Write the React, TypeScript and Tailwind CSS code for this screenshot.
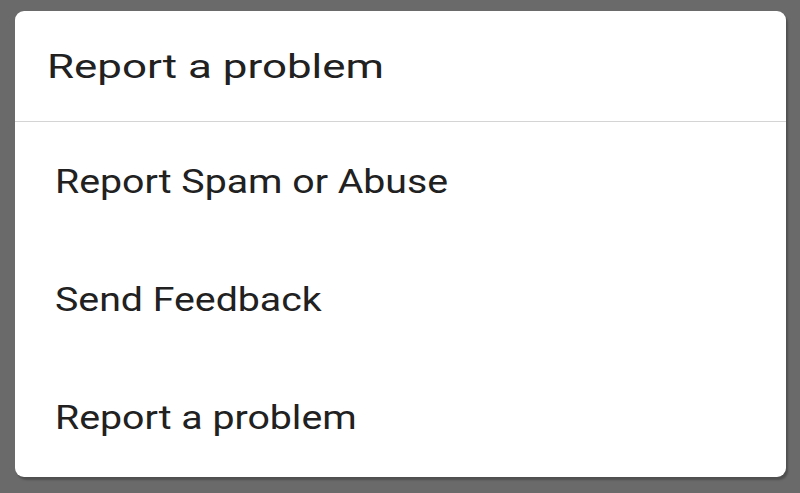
export default function App() {
  const items = ["Report Spam or Abuse", "Send Feedback", "Report a problem"];

  return (
    <div className="w-[800px] h-[493px] bg-[#6a6a6a] pt-[11px] pl-[15px] font-['Roboto',sans-serif]">
      <div className="w-[771px] h-[466px] bg-white rounded-[9px] shadow-[2px_3px_2px_rgba(0,0,0,0.25)] flex flex-col">
        {/* Title */}
        <div className="h-[111px] flex items-center pl-[32px] border-b border-[#d4d4d4]">
          <h2 className="text-[34px] text-[#212121] leading-none origin-left scale-x-[1.29]">
            Report a problem
          </h2>
        </div>

        {/* Options */}
        {items.map((item) => (
          <div key={item} className="h-[118px] flex items-center pl-[40px]">
            <span className="text-[33px] text-[#212121] leading-none origin-left scale-x-[1.19]">
              {item}
            </span>
          </div>
        ))}
      </div>
    </div>
  );
}
